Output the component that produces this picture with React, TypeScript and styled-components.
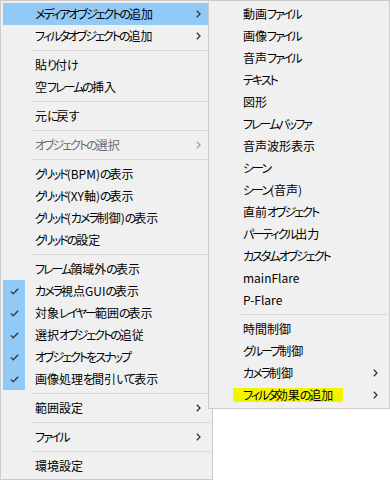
import React from 'react';
import styled, { createGlobalStyle } from 'styled-components';

type Entry =
    | { kind: 'sep' }
    | {
          kind?: 'item';
          label: string;
          sub?: boolean;
          checked?: boolean;
          active?: boolean;
          disabled?: boolean;
          marked?: boolean;
      };

const GlobalStyle = createGlobalStyle`
    html, body {
        margin: 0;
        padding: 0;
        background: #ffffff;
    }
    body {
        font-family: "Noto Sans CJK JP", "Noto Sans", sans-serif;
    }
`;

const Stage = styled.div`
    position: relative;
    width: 390px;
    height: 480px;
    overflow: hidden;
`;

const Menu = styled.div<{ $width: number }>`
    box-sizing: border-box;
    width: ${props => props.$width}px;
    padding: 2px;
    background: #f0f0f0;
    border: 1px solid #cccccc;
    display: flex;
    flex-direction: column;
    font-size: 12px;
    font-feature-settings: 'palt' 1;
    color: #000000;
`;

const SubMenu = styled(Menu)`
    position: absolute;
    top: 0;
    left: 208px;
`;

const Row = styled.div<{ $active?: boolean; $disabled?: boolean }>`
    display: grid;
    grid-template-columns: 22px 1fr auto;
    align-items: center;
    height: 22px;
    background: ${props => (props.$active ? '#91c9f7' : 'transparent')};
    color: ${props => (props.$disabled ? '#6d6d6d' : '#000000')};
`;

const CheckCell = styled.div<{ $checked?: boolean }>`
    height: 100%;
    display: flex;
    align-items: center;
    justify-content: center;
    background: ${props => (props.$checked ? '#91c9f7' : 'transparent')};
`;

const Label = styled.span`
    padding-left: 10px;
    white-space: nowrap;
    line-height: 22px;
`;

// kana in the Windows UI font are much narrower than in Noto CJK
const Kana = styled.span`
    letter-spacing: -2px;
`;

const Marker = styled.span`
    display: inline-block;
    margin-left: -10px;
    padding: 0 10px;
    line-height: 14px;
    background: #f4f400;
`;

const ArrowCell = styled.div<{ $disabled?: boolean }>`
    display: flex;
    align-items: center;
    padding-right: 9px;
    color: ${props => (props.$disabled ? '#a0a0a0' : '#333333')};
`;

const Separator = styled.div`
    height: 7px;
    display: flex;
    align-items: center;
    padding-left: 28px;
    &::after {
        content: '';
        flex: 1;
        height: 1px;
        background: #d7d7d7;
    }
`;

const CheckMark = () => (
    <svg width="9" height="7" viewBox="0 0 9 7">
        <polyline points="0.8,3.4 3.2,5.8 8.2,0.8" fill="none" stroke="#3a3a3a" strokeWidth="1.3" />
    </svg>
);

const Chevron = () => (
    <svg width="5" height="8" viewBox="0 0 5 8">
        <polyline points="0.8,0.7 4,4 0.8,7.3" fill="none" stroke="currentColor" strokeWidth="1.3" />
    </svg>
);

const mainItems: Entry[] = [
    { label: 'メディアオブジェクトの追加', sub: true, active: true },
    { label: 'フィルタオブジェクトの追加', sub: true },
    { kind: 'sep' },
    { label: '貼り付け' },
    { label: '空フレームの挿入' },
    { kind: 'sep' },
    { label: '元に戻す' },
    { kind: 'sep' },
    { label: 'オブジェクトの選択', sub: true, disabled: true },
    { kind: 'sep' },
    { label: 'グリッド(BPM)の表示' },
    { label: 'グリッド(XY軸)の表示' },
    { label: 'グリッド(カメラ制御)の表示' },
    { label: 'グリッドの設定' },
    { kind: 'sep' },
    { label: 'フレーム領域外の表示' },
    { label: 'カメラ視点GUIの表示', checked: true },
    { label: '対象レイヤー範囲の表示', checked: true },
    { label: '選択オブジェクトの追従', checked: true },
    { label: 'オブジェクトをスナップ', checked: true },
    { label: '画像処理を間引いて表示', checked: true },
    { kind: 'sep' },
    { label: '範囲設定', sub: true },
    { kind: 'sep' },
    { label: 'ファイル', sub: true },
    { kind: 'sep' },
    { label: '環境設定' },
];

const mediaItems: Entry[] = [
    { label: '動画ファイル' },
    { label: '画像ファイル' },
    { label: '音声ファイル' },
    { label: 'テキスト' },
    { label: '図形' },
    { label: 'フレームバッファ' },
    { label: '音声波形表示' },
    { label: 'シーン' },
    { label: 'シーン(音声)' },
    { label: '直前オブジェクト' },
    { label: 'パーティクル出力' },
    { label: 'カスタムオブジェクト' },
    { label: 'mainFlare' },
    { label: 'P-Flare' },
    { kind: 'sep' },
    { label: '時間制御' },
    { label: 'グループ制御' },
    { label: 'カメラ制御', sub: true },
    { label: 'フィルタ効果の追加', sub: true, marked: true },
];

const Text = ({ value }: { value: string }) => (
    <>
        {value
            .split(/([\u3040-\u30ff]+)/)
            .filter(Boolean)
            .map((part, i) => (/[\u3040-\u30ff]/.test(part) ? <Kana key={i}>{part}</Kana> : part))}
    </>
);

const MenuEntries = ({ items }: { items: Entry[] }) => (
    <>
        {items.map((entry, i) =>
            entry.kind === 'sep' ? (
                <Separator key={i} />
            ) : (
                <Row key={i} $active={entry.active} $disabled={entry.disabled}>
                    <CheckCell $checked={entry.checked}>{entry.checked && <CheckMark />}</CheckCell>
                    <Label>
                        {entry.marked ? (
                            <Marker>
                                <Text value={entry.label} />
                            </Marker>
                        ) : (
                            <Text value={entry.label} />
                        )}
                    </Label>
                    <ArrowCell $disabled={entry.disabled}>{entry.sub && <Chevron />}</ArrowCell>
                </Row>
            ),
        )}
    </>
);

const App = () => (
    <Stage>
        <GlobalStyle />
        <Menu $width={213}>
            <MenuEntries items={mainItems} />
        </Menu>
        <SubMenu $width={182}>
            <MenuEntries items={mediaItems} />
        </SubMenu>
    </Stage>
);

export default App;
